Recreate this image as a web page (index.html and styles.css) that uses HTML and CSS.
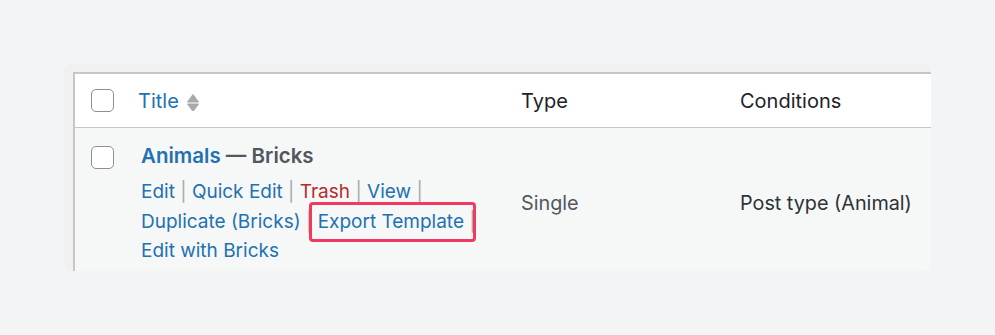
FILE: index.html
```html
<!DOCTYPE html>
<html lang="en">
<head>
    <meta charset="UTF-8">
    <meta name="viewport" content="width=device-width, initial-scale=1.0">
    <title>Templates - Bricks</title>
    <link rel="stylesheet" href="styles.css">
</head>
<body>
    <div class="screen">
        <div class="card">
            <div class="list">
                <div class="list-head">
                    <div class="cell cell-cb"><span class="checkbox"></span></div>
                    <div class="cell cell-title">
                        <a href="#" class="sort-link">Title
                            <svg class="sort-icon" width="14" height="20" viewBox="0 0 14 20">
                                <path d="M7 3.5 L12.5 11 H1.5 Z" fill="#a7aaad" stroke="#a7aaad" stroke-width="1" stroke-linejoin="round"/>
                                <path d="M1.5 13 H12.5 L7 20.5 Z" fill="#a7aaad" stroke="#a7aaad" stroke-width="1" stroke-linejoin="round"/>
                            </svg>
                        </a>
                    </div>
                    <div class="cell cell-type">Type</div>
                    <div class="cell cell-cond">Conditions</div>
                </div>

                <div class="list-row">
                    <div class="cell cell-cb"><span class="checkbox"></span></div>
                    <div class="cell cell-title">
                        <strong class="row-title"><a href="#">Animals</a> <span class="post-state">— Bricks</span></strong>
                        <div class="row-actions">
                            <span class="action"><a href="#">Edit</a> | </span>
                            <span class="action"><a href="#">Quick Edit</a> | </span>
                            <span class="action"><a href="#" class="trash">Trash</a> | </span>
                            <span class="action"><a href="#">View</a> | </span>
                            <span class="action"><a href="#">Duplicate (Bricks)</a> | </span>
                            <span class="action"><a href="#" class="export">Export Template</a> | </span>
                            <span class="action"><a href="#">Edit with Bricks</a></span>
                        </div>
                    </div>
                    <div class="cell cell-type muted">Single</div>
                    <div class="cell cell-cond">Post type (Animal)</div>
                </div>
            </div>
        </div>
    </div>
</body>
</html>
```

FILE: styles.css
```css
/* WP admin list table, zoomed */
* {
    box-sizing: border-box;
}

body {
    margin: 0;
    height: 335px;
    background: #f3f4f6;
    font-family: Inter, "Noto Sans", sans-serif;
    color: #2c3338;
}

a {
    color: #2271b1;
    text-decoration: none;
}

.screen {
    padding: 64px 0 0 64px;
}

.card {
    width: 867px;
    height: 207px;
    padding: 8px 0 0 9px;
    background: #f0f0f1;
    border-radius: 8px;
    overflow: hidden;
}

.list {
    border-left: 2px solid #c6c7ca;
    border-top: 2px solid #c6c7ca;
    height: 100%;
    background: #f6f7f7;
}

.list-head,
.list-row {
    display: grid;
    grid-template-columns: 53px 379px 219px 1fr;
}

.list-head {
    height: 54px;
    align-items: center;
    background: #fff;
    border-bottom: 1px solid #c6c7ca;
    font-size: 20px;
    color: #1d2327;
}

.list-row {
    align-items: start;
    font-size: 19.8px;
}

.checkbox {
    display: block;
    width: 23px;
    height: 23px;
    background: #fff;
    border: 1px solid #8c8f94;
    border-radius: 5px;
}

.cell-cb {
    padding-left: 16px;
}

.list-head .cell-title {
    padding-left: 10px;
}

.sort-link {
    display: inline-flex;
    align-items: center;
}

.sort-icon {
    margin-left: 7px;
}

.list-head .cell-type,
.list-head .cell-cond,
.list-row .cell-type,
.list-row .cell-cond {
    padding-left: 14px;
}

.list-row .cell-cb {
    padding-top: 18px;
}

.list-row .cell-title {
    padding: 14px 0 0 13px;
}

.list-row .cell-type,
.list-row .cell-cond {
    padding-top: 61px;
    line-height: 28px;
}

.muted {
    color: #50575e;
}

.row-title {
    display: block;
    font-size: 20.5px;
    font-weight: 600;
    line-height: 28px;
}

.post-state {
    color: #50575e;
}

.row-actions {
    margin-top: 7px;
    font-size: 19px;
    line-height: 29.5px;
    color: #a7aaad;
    width: 350px;
}

.row-actions .trash {
    color: #b32d2e;
}

.export {
    position: relative;
}

/* highlight marker drawn over the link */
.export::after {
    content: "";
    position: absolute;
    left: -9px;
    right: -12px;
    top: -8px;
    bottom: -9px;
    border: 3px solid #f03a62;
    border-radius: 4px;
}
```
